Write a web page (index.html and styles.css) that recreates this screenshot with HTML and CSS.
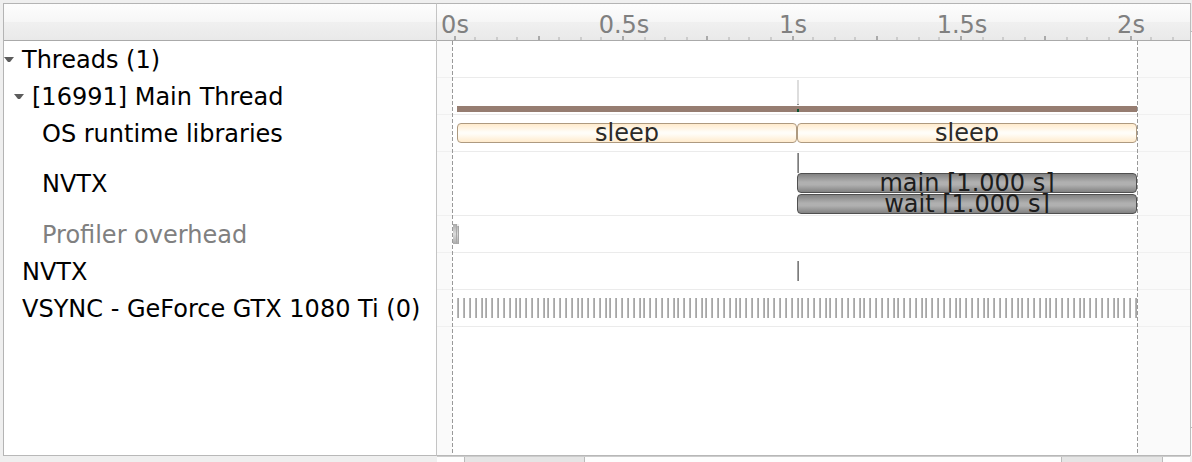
FILE: index.html
```html
<!DOCTYPE html>
<html lang="en">
<head>
<meta charset="utf-8">
<title>Timeline</title>
<link rel="stylesheet" href="styles.css">
</head>
<body>
<main class="view">
  <section class="names">
    <div class="head"></div>
    <div class="name level-0"><button class="toggle" aria-label="Collapse Threads"><svg viewBox="0 0 10 5"><path d="M0 0h10L6 5H4z"/></svg></button><span>Threads (1)</span></div>
    <div class="name level-1"><button class="toggle" aria-label="Collapse Main Thread"><svg viewBox="0 0 10 5"><path d="M0 0h10L6 5H4z"/></svg></button><span>[16991] Main Thread</span></div>
    <div class="name level-2"><span>OS runtime libraries</span></div>
    <div class="name level-2 tall"><span>NVTX</span></div>
    <div class="name level-2 muted"><span>Profiler overhead</span></div>
    <div class="name level-0"><span>NVTX</span></div>
    <div class="name level-0"><span>VSYNC - GeForce GTX 1080 Ti (0)</span></div>
  </section>
  <section class="timeline">
    <div class="head ruler" id="ruler"></div>
    <div class="plot">
      <div class="track"></div>
      <div class="track">
        <div class="event usage" data-from="20" data-to="700"></div>
        <div class="event peak" data-from="360"></div>
        <div class="event sample" data-from="360"></div>
      </div>
      <div class="track">
        <div class="event bar call" data-from="20" data-to="360"><span>sleep</span></div>
        <div class="event bar call" data-from="360" data-to="700"><span>sleep</span></div>
      </div>
      <div class="track tall">
        <div class="event mark lane-0" data-from="360"></div>
        <div class="event bar range lane-1" data-from="360" data-to="700"><span>main [1.000 s]</span></div>
        <div class="event bar range lane-2" data-from="360" data-to="700"><span>wait [1.000 s]</span></div>
      </div>
      <div class="track"><div class="event overhead" data-from="16"></div></div>
      <div class="track"><div class="event mark" data-from="360"></div></div>
      <div class="track" id="vsync"></div>
      <div class="outside" data-from="0" data-to="15"></div>
      <div class="outside" data-from="701" data-to="753"></div>
      <div class="limit" data-from="15"></div>
      <div class="limit" data-from="700"></div>
    </div>
  </section>
  <div class="edge"></div>
  <div class="corner"></div>
  <div class="scroll">
    <div class="thumb" data-from="27" data-to="148"></div>
    <div class="thumb" data-from="624" data-to="726"></div>
  </div>
</main>
<script src="timeline.js"></script>
</body>
</html>
```

FILE: styles.css
```css
* { box-sizing: border-box; }

body {
  margin: 0;
  background: #efefef;
  color: #000;
  font: 24px/36px "DejaVu Sans", sans-serif;
}

.view {
  display: grid;
  grid-template-columns: 434px minmax(0, 1fr) 2px;
  grid-template-rows: minmax(0, 1fr) 6px;
  height: 100vh;
  padding: 3px 0 0 3px;
}

.names,
.timeline {
  display: flex;
  flex-direction: column;
  border-top: 1px solid #b4b4b4;
  border-bottom: 1px solid #b8b8b8;
  background: #fff;
}

.names {
  border-left: 1px solid #b4b4b4;
  border-right: 1px solid #c4c4c4;
}

.head {
  flex: none;
  height: 37px;
  border-bottom: 1px solid #aaa;
  background: linear-gradient(#fdfdfd, #f6f6f6 50%, #f0f0f0 50%, #e9e9e9);
}

.name {
  display: flex;
  align-items: center;
  height: 37px;
  white-space: nowrap;
}

.level-0 { padding-left: 18px; }
.level-1 { padding-left: 28px; }
.level-2 { padding-left: 38px; }
.muted { color: #808080; }
.name.tall, .track.tall { height: 64px; }

.toggle {
  display: flex;
  width: 10px;
  height: 16px;
  margin: 0 8px 0 -18px;
  padding: 5px 0 6px;
  border: 0;
  background: none;
}

.toggle svg {
  width: 10px;
  height: 5px;
  fill: #5c5c5c;
}

.ruler,
.plot,
.track,
.scroll { position: relative; }

.tick {
  position: absolute;
  bottom: 0;
  width: 2px;
  height: 3px;
  background: #ccc;
}

.tick.major {
  height: 4px;
  background: #aaa;
}

.tick-label {
  position: absolute;
  top: 3px;
  transform: translateX(-50%);
  color: #808080;
}

.plot { flex: 1; }

.track {
  height: 37px;
  border-bottom: 1px solid #ebebeb;
}

.event { position: absolute; }

.usage {
  top: 28px;
  height: 6px;
  background: #967d71;
}

.peak {
  top: 2px;
  width: 2px;
  height: 25px;
  border-bottom: 1px solid #8c8c8c;
  background: #ddd;
}

.sample {
  top: 31px;
  width: 2px;
  height: 3px;
  background: #0c5230;
}

.bar {
  top: 8px;
  height: 20px;
  border: 1px solid;
  border-radius: 4px;
  line-height: 18px;
  text-align: center;
  white-space: nowrap;
  clip-path: inset(-1px 0 0 0);
}

.bar span {
  display: block;
  height: 18px;
  clip-path: inset(-2px 0 0 0);
}

.call {
  border-color: #ae9a80;
  background: linear-gradient(#ffebcd, #fffdf8 45%, #fffdf8 55%, #ffebcd);
  color: #2c2b28;
}

.range {
  border-color: #505050;
  background: linear-gradient(#828282, #b0b0b0 45%, #b0b0b0 60%, #828282);
  color: #1c1c1c;
}

.mark {
  top: 8px;
  width: 2px;
  height: 20px;
  border-left: 1px solid #a4a4a4;
  background: #7c7c7c;
}

.lane-0 { top: 1px; }
.lane-1 { top: 21px; }
.lane-2 { top: 42px; }

.overhead {
  top: 8px;
  width: 6px;
  height: 20px;
  background:
    linear-gradient(#eee, #eee) 4px 0 / 2px 2px no-repeat,
    linear-gradient(#a8a8a8, #a8a8a8) 3px 0 / 1px 20px no-repeat,
    linear-gradient(#a6a6a6, #a6a6a6) 5px 0 / 1px 20px no-repeat,
    linear-gradient(#aaa, #dcdcdc 50%, #aaa);
}

.pulse {
  position: absolute;
  top: 8px;
  width: 2px;
  height: 20px;
  border-left: 1px solid #b8b8b8;
  background: #a6a6a6;
}

.outside {
  position: absolute;
  top: 0;
  bottom: 0;
  background: rgba(245, 245, 245, 0.5);
}

.limit {
  position: absolute;
  top: 0;
  bottom: 0;
  width: 1px;
  background: repeating-linear-gradient(#999 0 4px, transparent 4px 6px);
}

.edge {
  border-left: 1px solid #bcbcbc;
  background:
    linear-gradient(#bbb, #bbb) 0 28px / 1px 1px no-repeat,
    linear-gradient(#bbb, #bbb) 0 424px / 1px 1px no-repeat,
    linear-gradient(#efefef 28px, #fcfcfc 28px);
}

.scroll {
  border-top: 1px solid #ccc;
  background: #fdfdfd;
}

.thumb {
  position: absolute;
  top: 0;
  bottom: 0;
  border: solid #bbb;
  border-width: 0 1px;
  background: #e5e5e5;
}
```

FILE: timeline.js
```js
// Timeline coordinates run from 0 to SPAN across the visible area.
const SPAN = 753;
const percent = value => (value / SPAN * 100) + '%';

document.querySelectorAll('[data-from]').forEach(item => {
  const from = Number(item.dataset.from);
  item.style.left = percent(from);
  if (item.dataset.to) {
    item.style.width = percent(Number(item.dataset.to) - from);
  }
});

function add(parent, className, position, text) {
  const item = document.createElement('span');
  item.className = className;
  item.style.left = percent(position);
  if (text) item.textContent = text;
  parent.append(item);
}

const ruler = document.getElementById('ruler');
const ORIGIN = 17;
const SECOND = 338;
for (let i = 0; i <= 34; i++) {
  const position = 2 * Math.floor((ORIGIN + i * SECOND / 16 - 1) / 2) + 1;
  add(ruler, i % 4 ? 'tick' : 'tick major', position);
}
['0s', '0.5s', '1s', '1.5s', '2s'].forEach((text, i) => {
  add(ruler, 'tick-label', ORIGIN + 1 + i * SECOND / 2, text);
});

// Display refreshes, drawn on a two-unit grid.
const vsync = document.getElementById('vsync');
for (let i = 0; i <= 120; i++) {
  add(vsync, 'pulse', 20 + 2 * Math.floor(i * 2.8205 + 0.83));
}
```
